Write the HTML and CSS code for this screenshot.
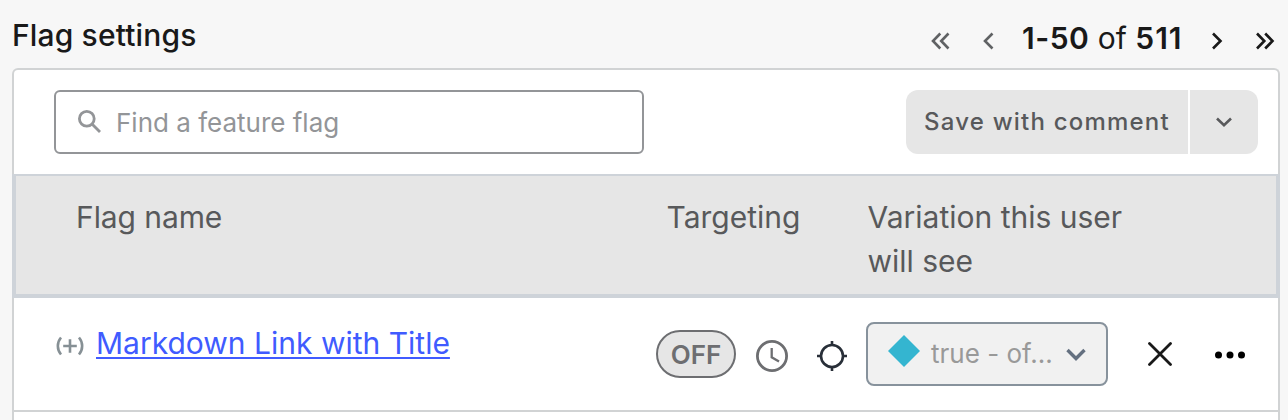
FILE: index.html
```html
<!DOCTYPE html>
<html lang="en">
<head>
<meta charset="utf-8">
<title>Flag settings</title>
<link rel="stylesheet" href="styles.css">
</head>
<body>
<header class="top">
  <h1 class="title">Flag settings</h1>
  <nav class="pager">
    <svg class="pg first" width="20" height="18" viewBox="0 0 20 18"><path d="M9.3 1.5 2 9l7.300 7.500M17.500 1.500 10.200 9l7.300 7.500"/></svg>
    <svg class="pg prev" width="12" height="18" viewBox="0 0 12 18"><path d="M9.500 1.500 2 9l7.500 7.500"/></svg>
    <span class="range"><b>1-50</b> of <b class="total">511</b></span>
    <svg class="pg next" width="12" height="18" viewBox="0 0 12 18"><path d="M2 1.500 9.500 9 2 16.500"/></svg>
    <svg class="pg last" width="20" height="18" viewBox="0 0 20 18"><path d="M2 1.500 9.300 9 2 16.500M10.200 1.500 17.500 9l-7.300 7.500"/></svg>
  </nav>
</header>
<main class="panel">
  <div class="toolbar">
    <div class="search">
      <svg width="24" height="24" viewBox="0 0 24 24"><circle cx="8.800" cy="8.800" r="7.400"/><path d="m14 14 8 8"/></svg>
      <span class="hint">Find a feature flag</span>
    </div>
    <div class="save">
      <span class="save-main"><span class="save-text">Save with comment</span></span>
      <span class="save-more"><svg width="16" height="10" viewBox="0 0 16 10"><path d="m1 1.500 7 6.700 7-6.700"/></svg></span>
    </div>
  </div>
  <div class="thead">
    <span class="th-name">Flag name</span>
    <span class="th-target">Targeting</span>
    <span class="th-var">Variation this user<br>will see</span>
  </div>
  <div class="row">
    <svg class="plus" width="28" height="20" viewBox="0 0 28 20"><path d="M5 1.500C.800 6.500.800 13.500 5 18.500M23 1.500c4.200 5 4.200 12 0 17M14 3.200v13.600M7.200 10h13.600"/></svg>
    <div class="name"><a class="link">Markdown Link with Title</a></div>
    <span class="off">OFF</span>
    <svg class="clock" width="32" height="32" viewBox="0 0 32 32"><circle cx="16" cy="16" r="14.600"/><path class="hands" d="M15.700 8v9.300l7.300 4.200"/></svg>
    <svg class="target" width="30" height="30" viewBox="0 0 30 30"><circle cx="15" cy="15" r="11"/><path d="M15 0v5M15 25v5M0 15h5M25 15h5"/></svg>
    <div class="select">
      <svg class="gem" width="32" height="32" viewBox="0 0 32 32"><path d="m16 0 16 16-16 16L0 16z"/></svg>
      <span class="value">true - of...</span>
      <svg class="caret" width="20" height="13" viewBox="0 0 20 13"><path d="m1.500 2 8.500 8.500L18.500 2"/></svg>
    </div>
    <svg class="close" width="24" height="24" viewBox="0 0 24 24"><path d="m1.500 1.500 21 21M22.500 1.500l-21 21"/></svg>
    <svg class="dots" width="30" height="8" viewBox="0 0 30 8"><circle cx="3.500" cy="4" r="3.500"/><circle cx="15" cy="4" r="3.500"/><circle cx="26.500" cy="4" r="3.500"/></svg>
  </div>
  <div class="row-next"></div>
</main>
</body>
</html>
```

FILE: styles.css
```css
* { box-sizing: border-box; }
html { background: #f7f7f7; }
body { margin: 0; width: 1288px; height: 420px; overflow: hidden; font-family: Inter, "Liberation Sans", sans-serif; color: #191919; }
svg { display: block; flex: none; fill: none; }
span, a { white-space: nowrap; }

.top { display: flex; justify-content: space-between; height: 68px; padding: 0 13px 0 12px; }
.title { margin: 0; padding-top: 15px; font-size: 30px; line-height: 40px; font-weight: 500; letter-spacing: 0.150px; }
.pager { display: flex; align-items: flex-start; }
.pg { margin-top: 32px; stroke: #191919; stroke-width: 2.600; }
.first, .prev { stroke: #606264; }
.prev { margin-left: 32px; }
.range { margin-left: 27px; margin-top: 18px; width: 162px; font-size: 30px; line-height: 40px; }
.range b { font-weight: 600; letter-spacing: 0.500px; }
.range .total { letter-spacing: 1px; }
.next { margin-left: 27px; }
.last { margin-left: 32px; }

.panel { width: 1268px; height: 360px; margin-left: 12px; background: #fff; border: 2px solid #d1d3d4; border-bottom: 0; border-radius: 6px 6px 0 0; }
.toolbar { display: flex; justify-content: space-between; height: 104px; padding: 20px 20px 20px 40px; }
.search { display: flex; align-items: center; width: 590px; height: 64px; padding-left: 22px; border: 2px solid #939598; border-radius: 6px; }
.search svg { stroke: #939598; stroke-width: 2.800; }
.hint { margin-left: 14px; font-size: 26px; line-height: 40px; color: #939598; padding-top: 2px; }
.save { display: flex; gap: 2px; height: 64px; color: #58595b; }
.save-main { display: flex; align-items: center; width: 282px; padding-left: 18px; padding-bottom: 2px; background: #e6e6e6; border-radius: 12px 0 0 12px; }
.save-text { font-size: 24px; font-weight: 500; letter-spacing: 1.210px; }
.save-more { display: flex; align-items: center; justify-content: center; width: 68px; background: #e6e6e6; border-radius: 0 12px 12px 0; }
.save-more svg { stroke: #58595b; stroke-width: 2.600; }

.thead { display: grid; grid-template-columns: 590.500px 201px 1fr; height: 124px; margin: 0 -2px; padding: 19px 0 0 60px; background: #e6e6e6; border: solid #ced3d9; border-width: 2px 4px 4px; font-size: 30px; line-height: 44px; color: #58595b; }
.th-name { letter-spacing: -0.080px; }

.row { display: flex; align-items: flex-start; height: 114px; padding-left: 42px; border-bottom: 2px solid #d1d3d4; }
.plus { margin-top: 38px; stroke: #869095; stroke-width: 2.600; }
.name { width: 560px; margin-left: 12px; padding-top: 25px; font-size: 30px; line-height: 40px; }
.link { color: #405bff; text-decoration: underline; text-decoration-thickness: 2px; text-underline-offset: 3px; text-decoration-skip-ink: none; }
.off { display: flex; align-items: center; justify-content: center; width: 80px; height: 48px; margin-top: 32px; border: 2px solid #6d6e71; border-radius: 24px; background: #e6e6e6; color: #6d6e71; font-size: 26px; font-weight: 600; }
.clock { margin: 42px 0 0 20px; stroke: #6d6e71; stroke-width: 2.800; }
.clock .hands { stroke-width: 2.300; }
.target { margin: 43px 0 0 29px; stroke: #282f38; stroke-width: 2.600; }
.select { display: flex; align-items: flex-start; width: 242px; height: 64px; margin: 24px 0 0 19px; padding-left: 20px; border: 2px solid #87929c; border-radius: 8px; background: #f1f1f1; }
.gem { margin-top: 11px; fill: #34b5d0; }
.value { width: 121px; margin: 10px 0 0 11px; font-size: 26px; line-height: 40px; color: #999; }
.caret { margin: 24px 0 0 14px; stroke: #647080; stroke-width: 3.400; }
.close { margin: 44px 0 0 40px; stroke: #191919; stroke-width: 2.800; stroke-linecap: round; }
.dots { margin: 53px 0 0 43px; fill: #000; }
.row-next { height: 10px; }
```
